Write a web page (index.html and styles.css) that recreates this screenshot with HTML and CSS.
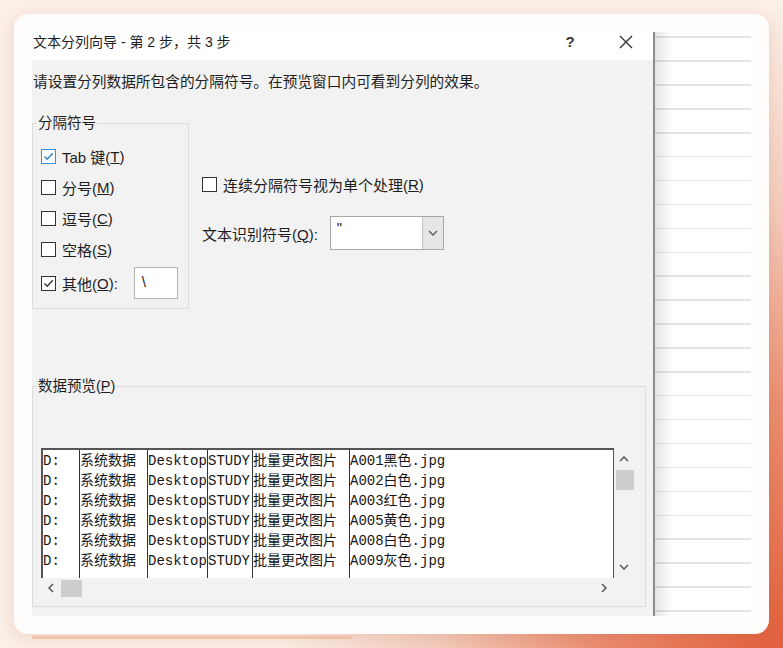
FILE: index.html
```html
<!DOCTYPE html>
<html lang="zh-CN">
    <head>
        <meta charset="UTF-8" />
        <meta name="viewport" content="width=device-width, initial-scale=1.0" />
        <title>文本分列向导</title>
        <link rel="stylesheet" href="styles.css">
    </head>
    <body>
        <div class="card">
            <div class="dialog">
                <div class="titlebar">
                    <div class="title">文本分列向导 - 第 2 步，共 3 步</div>
                    <div class="tbtn help">?</div>
                    <div class="tbtn close">
                        <svg width="14" height="14" viewBox="0 0 14 14"><path d="M1 1 L13 13 M13 1 L1 13" /></svg>
                    </div>
                </div>
                <div class="body">
                    <p class="hint">请设置分列数据所包含的分隔符号。在预览窗口内可看到分列的效果。</p>
                    <div class="options">
                        <fieldset class="group delims">
                            <legend>分隔符号</legend>
                            <div class="check">
                                <span class="box on blue"><svg viewBox="0 0 13 13"><path d="M2.5 6.5 L5.2 9.2 L10.8 3.2" /></svg></span>Tab 键(<u>T</u>)
                            </div>
                            <div class="check"><span class="box"></span>分号(<u>M</u>)</div>
                            <div class="check"><span class="box"></span>逗号(<u>C</u>)</div>
                            <div class="check"><span class="box"></span>空格(<u>S</u>)</div>
                            <div class="check last">
                                <span class="box on"><svg viewBox="0 0 13 13"><path d="M2.5 6.5 L5.2 9.2 L10.8 3.2" /></svg></span>其他(<u>O</u>):
                                <span class="other">\</span>
                            </div>
                        </fieldset>
                        <div class="side">
                            <div class="check"><span class="box"></span>连续分隔符号视为单个处理(<u>R</u>)</div>
                            <div class="qualifier">
                                <span>文本识别符号(<u>Q</u>):</span>
                                <div class="combo">
                                    <span class="value">"</span>
                                    <span class="drop">
                                        <svg width="10" height="6" viewBox="0 0 10 6"><path d="M1 1 L5 5 L9 1" /></svg>
                                    </span>
                                </div>
                            </div>
                        </div>
                    </div>
                    <fieldset class="group preview">
                        <legend>数据预览(<u>P</u>)</legend>
                        <div class="grid">
                            <div class="cols">
                                <div class="col c1"><div>D:</div><div>D:</div><div>D:</div><div>D:</div><div>D:</div><div>D:</div></div>
                                <div class="col c2"><div>系统数据</div><div>系统数据</div><div>系统数据</div><div>系统数据</div><div>系统数据</div><div>系统数据</div></div>
                                <div class="col c3"><div>Desktop</div><div>Desktop</div><div>Desktop</div><div>Desktop</div><div>Desktop</div><div>Desktop</div></div>
                                <div class="col c4"><div>STUDY</div><div>STUDY</div><div>STUDY</div><div>STUDY</div><div>STUDY</div><div>STUDY</div></div>
                                <div class="col c5"><div>批量更改图片</div><div>批量更改图片</div><div>批量更改图片</div><div>批量更改图片</div><div>批量更改图片</div><div>批量更改图片</div></div>
                                <div class="col c6"><div>A001黑色.jpg</div><div>A002白色.jpg</div><div>A003红色.jpg</div><div>A005黄色.jpg</div><div>A008白色.jpg</div><div>A009灰色.jpg</div></div>
                            </div>
                            <div class="vscroll">
                                <span class="arrow"><svg width="10" height="6" viewBox="0 0 10 6"><path d="M1 5 L5 1 L9 5" /></svg></span>
                                <span class="thumb"></span>
                                <span class="fill"></span>
                                <span class="arrow"><svg width="10" height="6" viewBox="0 0 10 6"><path d="M1 1 L5 5 L9 1" /></svg></span>
                            </div>
                            <div class="hscroll">
                                <span class="arrow"><svg width="6" height="10" viewBox="0 0 6 10"><path d="M5 1 L1 5 L5 9" /></svg></span>
                                <span class="thumb"></span>
                                <span class="fill"></span>
                                <span class="arrow"><svg width="6" height="10" viewBox="0 0 6 10"><path d="M1 1 L5 5 L1 9" /></svg></span>
                            </div>
                        </div>
                    </fieldset>
                </div>
            </div>
            <div class="sheet"></div>
        </div>
        <div class="glow"></div>
    </body>
</html>
```

FILE: styles.css
```css
* {
    box-sizing: border-box;
}
html,
body {
    margin: 0;
    height: 648px;
}
body {
    padding: 14px;
    font-family: "Liberation Sans", "Noto Sans CJK SC", sans-serif;
    color: #1e1e1e;
    background:
        radial-gradient(ellipse 500px 640px at 100% 100%, #e3603c 0%, #eb8e70 38%, #f4cbbb 68%, rgba(251, 238, 230, 0) 100%),
        #fbefe7;
}

.card {
    display: flex;
    width: 755px;
    height: 620px;
    padding: 18px;
    background: #fefdfc;
    border-radius: 14px;
    box-shadow: 0 4px 16px rgba(160, 80, 50, 0.16);
}
.glow {
    width: 320px;
    height: 3px;
    margin: 2px 0 0 18px;
    background: linear-gradient(to right, rgba(236, 172, 134, 0.55), rgba(238, 168, 128, 0.5));
}

/* dialog */
.dialog {
    display: flex;
    flex-direction: column;
    width: 621px;
}
.titlebar {
    display: flex;
    height: 28px;
    padding: 1px 4px 0 1px;
    background: #fff;
    font-size: 14px;
    line-height: 18px;
}
.title {
    flex: 1;
}
.tbtn {
    display: flex;
    justify-content: center;
    width: 46px;
    height: 18px;
}
.help {
    font-size: 15px;
    font-weight: bold;
    color: #333;
}
.close {
    margin-left: 10px;
    align-items: center;
}
.close path {
    stroke: #333;
    stroke-width: 1.4;
    fill: none;
}
.body {
    flex: 1;
    background: #f2f2f2;
}
.hint {
    margin: 12px 0 0 1px;
    font-size: 14.7px;
    line-height: 20px;
}

/* group boxes */
.group {
    margin: 0;
    min-width: 0;
    border: 1px solid #dcdcdc;
}
.group legend {
    padding: 0 1px;
    font-size: 14.5px;
    line-height: 18px;
}
.options {
    display: flex;
    align-items: flex-start;
    margin-top: 22px;
}
.delims {
    width: 157px;
    padding: 9px 0 9px 4px;
}

.check {
    display: flex;
    align-items: center;
    height: 31px;
    margin-left: 4px;
    font-size: 15px;
    white-space: nowrap;
}
.check.last {
    height: 32px;
    margin-top: 2px;
}
.box {
    display: flex;
    width: 15px;
    height: 15px;
    margin-right: 6px;
    background: #fff;
    border: 1px solid #333;
}
.box svg {
    width: 13px;
    height: 13px;
}
.box path {
    fill: none;
    stroke: #333;
    stroke-width: 1.4;
}
.box.blue {
    border-color: #3d8fd6;
}
.box.blue path {
    stroke: #2f80c8;
}
.other {
    width: 44px;
    height: 32px;
    margin-left: 16px;
    padding: 4px 7px;
    background: #fff;
    border: 1px solid #b4b4b4;
    line-height: 20px;
}

.side {
    margin-left: 13px;
    padding-top: 55px;
}
.side .check {
    margin-left: 0;
}
.qualifier {
    display: flex;
    align-items: center;
    gap: 12px;
    margin-top: 16px;
    font-size: 15px;
}
.combo {
    display: flex;
    width: 114px;
    height: 34px;
    background: #fff;
    border: 1px solid #a8a8a8;
}
.combo .value {
    flex: 1;
    padding: 2px 6px;
    line-height: 18px;
}
.combo .drop {
    display: flex;
    align-items: center;
    justify-content: center;
    width: 21px;
    background: #e6e6e6;
    border-left: 1px solid #c4c4c4;
}
.combo .drop path {
    fill: none;
    stroke: #555;
    stroke-width: 1.3;
}

/* preview */
.preview {
    width: 614px;
    margin-top: 68px;
    padding: 53px 0 8px 4px;
}
.grid {
    display: grid;
    grid-template-columns: 573px 20px;
    grid-template-rows: 130px 20px;
    margin-left: 4px;
}
.cols {
    display: flex;
    overflow: hidden;
    background: #fff;
    border-top: 2px solid #555;
    border-left: 2px solid #555;
    border-right: 1px solid #555;
    font-family: "Liberation Mono", "Noto Sans CJK SC", monospace;
    font-size: 14px;
    line-height: 20px;
    color: #161616;
}
.col {
    padding-top: 1px;
    white-space: nowrap;
    overflow: hidden;
    border-left: 1px solid #333;
}
.c1 {
    width: 36px;
    border-left: none;
}
.c2 {
    width: 68px;
}
.c3 {
    width: 60px;
}
.c4 {
    width: 45px;
}
.c5 {
    width: 97px;
}
.c6 {
    flex: 1;
}

.vscroll,
.hscroll {
    display: flex;
}
.vscroll {
    flex-direction: column;
}
.arrow {
    display: flex;
    align-items: center;
    justify-content: center;
    flex: 0 0 22px;
}
.hscroll .arrow {
    flex-basis: 20px;
}
.arrow path {
    fill: none;
    stroke: #555;
    stroke-width: 1.5;
}
.thumb {
    background: #cdcdcd;
}
.vscroll .thumb {
    height: 20px;
    margin-left: 2px;
}
.hscroll .thumb {
    width: 21px;
    height: 17px;
    margin-top: 2px;
}
.fill {
    flex: 1;
}

/* sheet strip beside the dialog */
.sheet {
    width: 98px;
    border-left: 2px solid #8d8d8d;
    background:
        linear-gradient(to right, rgba(0, 0, 0, 0.1), rgba(0, 0, 0, 0) 18px),
        repeating-linear-gradient(to bottom, transparent 0, transparent 4.5px, #e4e4e4 4.5px, #e4e4e4 6px, transparent 6px, transparent 23.9px),
        #fff;
}
```
